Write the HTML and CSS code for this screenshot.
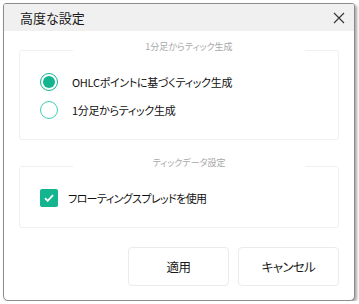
FILE: index.html
```html
<!DOCTYPE html>
<html lang="ja">
<head>
    <meta charset="UTF-8"/>
    <title>高度な設定</title>
    <link rel="stylesheet" href="styles.css">
</head>
<body>
<div class="dialog">
    <div class="titlebar">
        <span class="title">高度な設定</span>
        <svg class="close" width="12" height="12" viewBox="0 0 12 12">
            <path d="M1 1L11 11M11 1L1 11" stroke="#333" stroke-width="1.1" fill="none"/>
        </svg>
    </div>
    <div class="body">
        <fieldset class="group">
            <legend>1分足からティック生成</legend>
            <label class="option">
                <span class="radio checked"></span>
                OHLCポイントに基づくティック生成
            </label>
            <label class="option">
                <span class="radio"></span>
                1分足からティック生成
            </label>
        </fieldset>

        <fieldset class="group group-data">
            <legend>ティックデータ設定</legend>
            <label class="option option-check">
                <span class="checkbox">
                    <svg width="10" height="8" viewBox="0 0 10 8">
                        <path d="M1 4.2L3.7 6.8L9 1.2" stroke="#fff" stroke-width="1.8" fill="none"/>
                    </svg>
                </span>
                フローティングスプレッドを使用
            </label>
        </fieldset>

        <div class="actions">
            <button type="button">適用</button>
            <button type="button">キャンセル</button>
        </div>
    </div>
</div>
</body>
</html>
```

FILE: styles.css
```css
body {
    margin: 0;
    background-color: #fff;
    font-family: "Noto Sans CJK JP", "Noto Sans", sans-serif;
    font-feature-settings: "palt";
    color: #1a1a1a;
}

.dialog {
    margin: 3px 0 0 3px;
    width: 350px;
    height: 296px;
    border: 1px solid #8c8c8c;
    border-radius: 3px 3px 5px 5px;
    box-shadow: 2px 2px 3px rgba(0, 0, 0, 0.35);
    background-color: #fff;
    display: flex;
    flex-direction: column;
    overflow: hidden;
}

.titlebar {
    height: 27px;
    background-color: #f0f0f0;
    display: flex;
    align-items: center;
    justify-content: space-between;
    padding: 0 9px 0 16px;
    flex-shrink: 0;
}

.title {
    font-size: 13px;
    color: #1a1a1a;
}

.body {
    padding: 10px 15px 0 15px;
    display: flex;
    flex-direction: column;
}

.group {
    margin: 0;
    border: 1px solid #f0f0f0;
    border-radius: 3px;
    padding: 14px 0 20px 20px;
    display: flex;
    flex-direction: column;
    gap: 10px;
}

.group legend {
    margin: 0 auto;
    padding: 0 0 6px 0;
    width: 232px;
    text-align: center;
    font-size: 9px;
    color: #a8a8a8;
    line-height: 12px;
}

.group-data {
    margin-top: 17px;
}

.option {
    display: flex;
    align-items: center;
    gap: 14px;
    font-size: 11px;
    line-height: 18px;
    letter-spacing: -0.3px;
    color: #111;
}

.option-check {
    gap: 10px;
    letter-spacing: -0.6px;
}

.radio {
    width: 18px;
    height: 18px;
    border: 1.5px solid #3fcfb0;
    border-radius: 50%;
    box-sizing: border-box;
    display: flex;
    align-items: center;
    justify-content: center;
}

.radio.checked {
    border-color: #14b48f;
}

.radio.checked::after {
    content: "";
    width: 12px;
    height: 12px;
    border-radius: 50%;
    background-color: #14b48f;
}

.checkbox {
    width: 18px;
    height: 18px;
    border-radius: 2px;
    background-color: #14b48f;
    display: flex;
    align-items: center;
    justify-content: center;
}

.actions {
    margin-top: 19px;
    display: flex;
    justify-content: flex-end;
    gap: 9px;
}

.actions button {
    width: 101px;
    height: 39px;
    background-color: #fff;
    border: 1px solid #ebebeb;
    border-radius: 4px;
    font-family: inherit;
    font-feature-settings: "palt";
    font-size: 12.5px;
    letter-spacing: -0.6px;
    color: #1a1a1a;
}
```
